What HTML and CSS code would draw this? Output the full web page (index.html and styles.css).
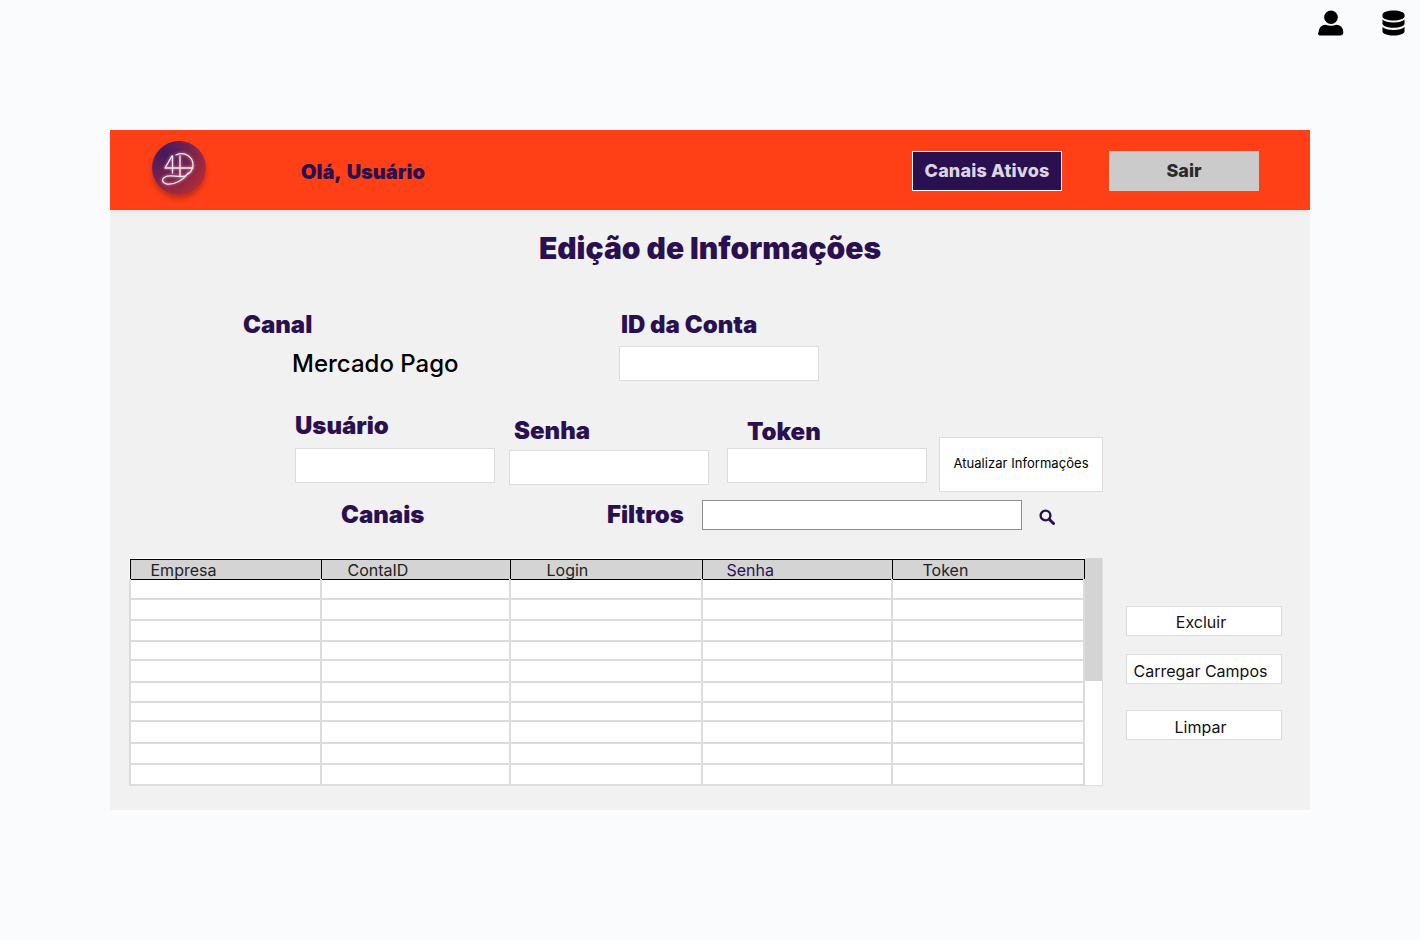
FILE: index.html
```html
<!DOCTYPE html>
<html lang="pt-BR">
<head>
    <meta charset="UTF-8">
    <title>Edição de Informações</title>
    <link rel="stylesheet" href="styles.css">
</head>
<body>
    <div class="top-icons">
        <svg class="top-icon" viewBox="0 0 26 26" width="26" height="26"><circle cx="13" cy="7.2" r="6.8"/><path d="M0.7 22.500c0-5 3-7.800 7-7.800 1.500.6 3.300 1 5.300 1s3.800-.4 5.300-1c4 0 7 2.800 7 7.800 0 1.800-1.300 3-3 3h-19.600c-1.700 0-3-1.200-3-3z"/></svg>
        <svg class="top-icon" viewBox="0 0 24 26" width="23" height="26" preserveAspectRatio="none"><path d="M12 .6c6.500 0 11.500 1.800 11.500 4v1.800c0 2.200-5 4-11.500 4s-11.500-1.800-11.500-4v-1.800c0-2.200 5-4 11.500-4z"/><path d="M.5 9.400c2 2 6.500 3 11.500 3s9.500-1 11.500-3v4.400c0 2.200-5 4-11.500 4s-11.500-1.800-11.500-4z"/><path d="M.5 17c2 2 6.500 3 11.500 3s9.500-1 11.500-3v4.600c0 2.200-5 4-11.500 4s-11.500-1.800-11.500-4z"/></svg>
    </div>

    <div class="panel">
        <header class="topbar">
            <div class="logo">
                <svg class="logo-mark" viewBox="0 0 54 54" width="54" height="54" fill="none" stroke="#fbe9ee" stroke-width="1.300" stroke-linecap="round" stroke-linejoin="round">
                    <path d="M20 15L13 27H41"/>
                    <path d="M20.500 15V32"/>
                    <path d="M28 15V35"/>
                    <path d="M24 14C33 10 41 16 41 24C41 30 37 33 33 35C27 37 18 33 13 36C9 38 10 42 15 43C22 44 32 39 36 32"/>
                </svg>
            </div>
            <span class="greeting">Olá, Usuário</span>
            <button class="btn-active">Canais Ativos</button>
            <button class="btn-exit">Sair</button>
        </header>

        <h1 class="page-title">Edição de Informações</h1>

        <div class="row-account">
            <div class="field-channel">
                <label class="label">Canal</label>
                <div class="channel-name">Mercado Pago</div>
            </div>
            <div class="field-account">
                <label class="label">ID da Conta</label>
                <input class="input" type="text">
            </div>
        </div>

        <div class="row-credentials">
            <div class="field-user">
                <label class="label">Usuário</label>
                <input class="input" type="text">
            </div>
            <div class="field-pass">
                <label class="label">Senha</label>
                <input class="input" type="text">
            </div>
            <div class="field-token">
                <label class="label">Token</label>
                <input class="input" type="text">
            </div>
            <button class="btn-update">Atualizar Informações</button>
        </div>

        <div class="row-filter">
            <span class="label label-channels">Canais</span>
            <span class="label label-filters">Filtros</span>
            <input class="filter-input" type="text">
            <svg class="search-icon" viewBox="0 0 16 16" width="16" height="16"><circle cx="6.500" cy="6.500" r="4.900" fill="none" stroke="#2b1050" stroke-width="2.400"/><path d="M10.200 10.200L14.500 14.500" stroke="#2b1050" stroke-width="3" stroke-linecap="round"/></svg>
        </div>

        <div class="row-table">
            <div class="table-wrap">
                <table class="grid">
                    <colgroup>
                        <col class="col-a"><col class="col-b"><col class="col-c"><col class="col-d"><col class="col-e">
                    </colgroup>
                    <thead>
                        <tr>
                            <th class="th-a">Empresa</th>
                            <th class="th-b">ContaID</th>
                            <th class="th-c">Login</th>
                            <th class="th-d">Senha</th>
                            <th class="th-e">Token</th>
                        </tr>
                    </thead>
                    <tbody>
                        <tr><td></td><td></td><td></td><td></td><td></td></tr>
                        <tr><td></td><td></td><td></td><td></td><td></td></tr>
                        <tr><td></td><td></td><td></td><td></td><td></td></tr>
                        <tr><td></td><td></td><td></td><td></td><td></td></tr>
                        <tr><td></td><td></td><td></td><td></td><td></td></tr>
                        <tr><td></td><td></td><td></td><td></td><td></td></tr>
                        <tr><td></td><td></td><td></td><td></td><td></td></tr>
                        <tr><td></td><td></td><td></td><td></td><td></td></tr>
                        <tr><td></td><td></td><td></td><td></td><td></td></tr>
                        <tr><td></td><td></td><td></td><td></td><td></td></tr>
                    </tbody>
                </table>
                <div class="scroll-track"><div class="scroll-thumb"></div></div>
            </div>
            <div class="side-actions">
                <button class="btn-side btn-delete">Excluir</button>
                <button class="btn-side btn-load">Carregar Campos</button>
                <button class="btn-side btn-clear">Limpar</button>
            </div>
        </div>
    </div>
</body>
</html>
```
FILE: styles.css
```css
* {
    box-sizing: border-box;
}
body {
    margin: 0;
    height: 940px;
    overflow: hidden;
    background-color: #fafbfd;
    font-family: 'Inter', sans-serif;
    color: #000;
}
button {
    font-family: 'Inter', sans-serif;
    cursor: pointer;
}

.top-icons {
    height: 130px;
    display: flex;
    justify-content: flex-end;
    align-items: flex-start;
    gap: 38px;
    padding: 10px 15px 0 0;
}

.panel {
    width: 1200px;
    height: 680px;
    margin-left: 110px;
    background-color: #f1f1f1;
}
.topbar {
    height: 80px;
    background-color: #ff3f16;
    display: flex;
    align-items: center;
    box-shadow: 0 4px 4px rgba(0, 0, 0, 0.03);
}
.logo {
    width: 54px;
    height: 54px;
    margin-left: 42px;
    margin-top: -4px;
    border-radius: 50%;
    background: radial-gradient(circle at 22% 22%, #43195f, #702250 40%, #d0302c 100%);
    box-shadow: 0 4px 4px rgba(120, 20, 20, 0.4);
}
.logo-mark {
    display: block;
    filter: drop-shadow(0 0 1.500px rgba(255, 190, 210, 0.8));
}
.greeting {
    margin-left: 95px;
    font-size: 20px;
    font-weight: 900;
    word-spacing: 2px;
    color: #2b1050;
    margin-top: 3px;
}
.btn-active {
    margin-left: auto;
    margin-top: 2px;
    width: 150px;
    height: 40px;
    padding: 0 0 2px;
    background-color: #2b1050;
    color: #dcd6e2;
    border: 1px solid #fff;
    font-size: 18px;
    font-weight: 800;
    letter-spacing: 0.15px;
}
.btn-exit {
    margin-left: 47px;
    margin-right: 51px;
    margin-top: 2px;
    width: 150px;
    height: 40px;
    padding: 0 0 2px;
    background-color: #cbcbcb;
    color: #2a2a2a;
    border: none;
    font-size: 18px;
    font-weight: 800;
}

.page-title {
    margin: 18px 0 0;
    text-align: center;
    font-size: 30px;
    line-height: 40px;
    font-weight: 900;
    color: #2b1050;
}

.label {
    display: block;
    font-size: 24px;
    line-height: 30px;
    font-weight: 900;
    color: #2b1050;
}
.input {
    display: block;
    width: 200px;
    height: 35px;
    background-color: #fff;
    border: 1px solid #dcdcdc;
}

.row-account {
    display: flex;
    margin: 42px 0 0 133px;
}
.field-channel {
    width: 376px;
}
.channel-name {
    margin: 9px 0 0 49px;
    font-size: 24px;
    line-height: 30px;
    font-weight: 500;
}
.field-account .label {
    margin-left: 2px;
    margin-bottom: 6px;
}

.row-credentials {
    display: flex;
    align-items: flex-start;
    margin: 30px 0 0 185px;
    height: 82px;
}
.field-user {
    width: 214px;
}
.field-user .label {
    margin-bottom: 7px;
}
.field-pass {
    margin-top: 5px;
    width: 218px;
}
.field-pass .label {
    margin-left: 5px;
    margin-bottom: 4px;
}
.field-token {
    margin-top: 6px;
    width: 212px;
}
.field-token .label {
    margin-left: 20px;
    margin-bottom: 1px;
}
.btn-update {
    margin-top: 26px;
    width: 164px;
    height: 55px;
    background-color: #fff;
    border: 1px solid #dcdcdc;
    font-size: 13px;
    letter-spacing: 0.05px;
    color: #000;
    padding: 0 0 3px;
}

.row-filter {
    display: flex;
    align-items: center;
    height: 30px;
    margin-top: 7px;
}
.label-channels {
    margin-left: 231px;
    width: 266px;
}
.label-filters {
    width: 95px;
}
.filter-input {
    width: 320px;
    height: 30px;
    background-color: #fff;
    border: 1px solid #8e8e8e;
}
.search-icon {
    margin: 3px 0 0 17px;
}

.row-table {
    display: flex;
    margin: 28px 0 0 20px;
}
.table-wrap {
    display: flex;
    width: 973px;
    height: 228px;
    background-color: #fff;
    border: 1px solid #dedede;
    border-top: none;
    border-left: none;
}
.grid {
    width: 954px;
    height: 226px;
    margin: 1px 0 0 -1px;
    flex-shrink: 0;
    table-layout: fixed;
    border-collapse: collapse;
    background-color: #fff;
}
.col-a { width: 191px; }
.col-b { width: 189px; }
.col-c { width: 192px; }
.col-d { width: 190px; }
.col-e { width: 192px; }
.grid th {
    height: 20px;
    padding: 1px 0 0;
    background-color: #d4d4d4;
    border: 1.500px solid #000;
    font-size: 16px;
    font-weight: 400;
    line-height: 18px;
    text-align: left;
    color: #222;
}
.th-a { padding-left: 20px !important; }
.th-b { padding-left: 26px !important; }
.th-c { padding-left: 36px !important; }
.th-d { padding-left: 24px !important; color: #2b1050 !important; }
.th-e { padding-left: 30px !important; }
.grid td {
    border: 2px solid #dcdcdc;
    border-top-width: 1.500px;
    padding: 0;
}
.grid tbody tr:nth-child(1) { height: 19px; }
.grid tbody tr:nth-child(2) { height: 21px; }
.grid tbody tr:nth-child(3) { height: 21px; }
.grid tbody tr:nth-child(4) { height: 19px; }
.grid tbody tr:nth-child(5) { height: 22px; }
.grid tbody tr:nth-child(6) { height: 20px; }
.grid tbody tr:nth-child(7) { height: 19px; }
.grid tbody tr:nth-child(8) { height: 22px; }
.grid tbody tr:nth-child(9) { height: 21px; }
.grid tbody tr:nth-child(10) { height: 21px; }
.scroll-track {
    flex: 1;
}
.scroll-thumb {
    height: 123px;
    background-color: #d4d4d4;
}

.side-actions {
    display: flex;
    flex-direction: column;
    margin: 48px 0 0 23px;
}
.btn-side {
    width: 156px;
    height: 30px;
    background-color: #fff;
    border: 1px solid #dcdcdc;
    font-size: 16px;
    color: #111;
    padding: 2px 6px 0 0;
}
.btn-load {
    margin-top: 18px;
    padding: 4px 7px 0 0;
}
.btn-clear {
    margin-top: 26px;
    padding: 4px 7px 0 0;
}
```
